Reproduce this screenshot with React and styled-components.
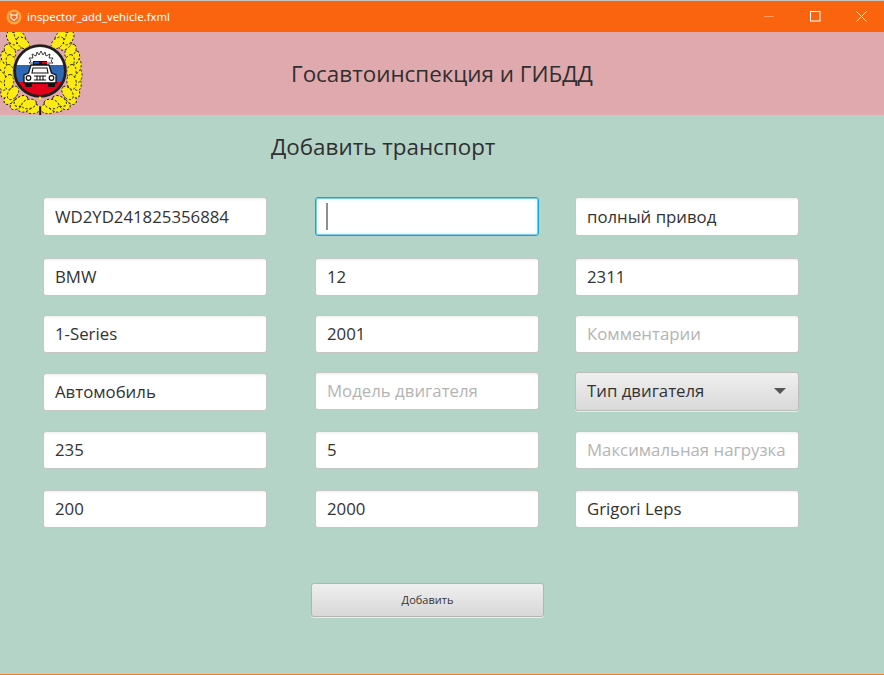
import React from "react";
import styled, { createGlobalStyle } from "styled-components";

const GlobalStyle = createGlobalStyle`
  html, body {
    margin: 0;
    padding: 0;
    height: 100%;
    overflow: hidden;
    background: #b5d4c8;
  }
  input::placeholder {
    color: #b4b4b4;
    opacity: 1;
  }
`;

const Page = styled.div`
  width: 884px;
  height: 675px;
  display: flex;
  flex-direction: column;
  font-family: "Open Sans", "Noto Sans", sans-serif;
  border-top: 1px solid #c9c4c0;
  border-bottom: 1px solid #fa7a1e;
  box-sizing: border-box;
`;

const TitleBar = styled.div`
  height: 31px;
  flex: none;
  display: flex;
  align-items: center;
  background: #fb640f;
  color: #fff;
  font-size: 11.3px;
  padding-left: 6px;
`;

const TitleText = styled.span`
  margin-left: 5px;
  flex: 1;
  font-family: "Noto Sans", sans-serif;
`;

const WinButton = styled.div`
  width: 46px;
  height: 31px;
  display: flex;
  align-items: center;
  justify-content: center;
`;

const Banner = styled.header`
  height: 83px;
  flex: none;
  display: flex;
  background: #e0a9ae;
`;

const Emblem = styled.svg`
  width: 84px;
  height: 83px;
  flex: none;
`;

const BannerTitle = styled.h1`
  margin: 0 0 0 207px;
  font-size: 22.4px;
  font-weight: 400;
  line-height: 83px;
  color: #2f2f2f;
`;

const Body = styled.main`
  flex: 1;
  display: flex;
  flex-direction: column;
`;

const Heading = styled.h2`
  margin: 16px 0 0 271px;
  font-size: 22.4px;
  font-weight: 400;
  line-height: 32px;
  color: #2f2f2f;
`;

const Form = styled.div`
  display: grid;
  grid-template-columns: 272px 260px 224px;
  grid-template-rows: 61px 57px 57px 59px 59px 38px;
  margin: 34px 0 0 43px;
`;

const Field = styled.input`
  box-sizing: border-box;
  width: 224px;
  height: ${(p) => (p.$row === 1 ? 39 : 38)}px;
  padding: 0 11px ${(p) => (p.$row === 1 ? 0 : 2)}px;
  margin-top: ${(p) => p.$shift || 0}px;
  grid-column: ${(p) => p.$col};
  grid-row: ${(p) => p.$row};
  border: 1px solid #c6c6c6;
  border-radius: 3px;
  background: linear-gradient(#f1f1f1 0, #fff 3px);
  font-family: inherit;
  font-size: 16.8px;
  color: #333;
  outline: none;
  ${(p) =>
    p.$focused &&
    `
    border: 1px solid #10a6d8;
    box-shadow: inset 0 0 0 1px #7fcdea, inset 0 0 3px 2px #dff3fb;
    background: #fff;
  `}
`;

const Caret = styled.div`
  grid-column: 2;
  grid-row: 1;
  justify-self: start;
  align-self: start;
  width: 2px;
  height: 27px;
  margin: 6px 0 0 11px;
  background: #8f8f8f;
  z-index: 1;
`;

const Select = styled.div`
  box-sizing: border-box;
  width: 224px;
  height: 39px;
  grid-column: 3;
  grid-row: 4;
  display: flex;
  align-items: center;
  justify-content: space-between;
  padding: 0 12px 2px 11px;
  border: 1px solid #bcbcbc;
  border-radius: 3px;
  background: linear-gradient(#efefef, #d9d9d9);
  box-shadow: 0 1px 0 #e6eeea;
  font-size: 16.8px;
  color: #333;
`;

const Arrow = styled.span`
  width: 0;
  height: 0;
  border-left: 6px solid transparent;
  border-right: 6px solid transparent;
  border-top: 6px solid #555;
`;

const SubmitRow = styled.div`
  margin: 55px 0 0 311px;
`;

const Submit = styled.button`
  box-sizing: border-box;
  width: 233px;
  height: 34px;
  border: 1px solid #b4b4b4;
  border-radius: 3px;
  background: linear-gradient(#efefef, #d8d8d8);
  box-shadow: 0 1px 0 #e8f0ec;
  font-family: inherit;
  font-size: 11px;
  color: #333;
  padding: 0 0 2px;
`;

const fields = [
  { col: 1, row: 1, value: "WD2YD241825356884" },
  { col: 1, row: 2, value: "BMW" },
  { col: 1, row: 3, value: "1-Series" },
  { col: 1, row: 4, value: "Автомобиль", shift: 1 },
  { col: 1, row: 5, value: "235" },
  { col: 1, row: 6, value: "200" },
  { col: 2, row: 1, value: "", focused: true },
  { col: 2, row: 2, value: "12" },
  { col: 2, row: 3, value: "2001" },
  { col: 2, row: 4, placeholder: "Модель двигателя" },
  { col: 2, row: 5, value: "5" },
  { col: 2, row: 6, value: "2000" },
  { col: 3, row: 1, value: "полный привод" },
  { col: 3, row: 2, value: "2311" },
  { col: 3, row: 3, placeholder: "Комментарии" },
  { col: 3, row: 5, placeholder: "Максимальная нагрузка" },
  { col: 3, row: 6, value: "Grigori Leps" },
];

function AppIcon() {
  return (
    <svg width="16" height="16" viewBox="0 0 16 16">
      <circle cx="8" cy="8" r="7.5" fill="#f4a93f" />
      <circle cx="8" cy="8" r="5" fill="#ee6a2a" />
      <path d="M5 5l1.500 1.200h3L11 5v4L8 11.500 5 9z" fill="none" stroke="#fde3cf" strokeWidth="1.3" />
    </svg>
  );
}

// half of the wreath: x, y and tilt of each leaf
const leaves = [
  [33, 77, 8], [25, 75, 22], [17, 72, 35], [10, 66, 50], [6, 59, 65],
  [4, 51, 78], [3, 43, 90], [4, 34, 100], [6, 26, 112], [10, 19, 125],
  [15, 12, 135], [12, 6, 120], [20, 5, 125], [23, 11, 140],
  [11, 30, 105], [9, 40, 95], [9, 50, 82], [13, 61, 55], [21, 69, 30], [29, 72, 14],
];

function Wreath({ flip }) {
  return (
    <g transform={flip ? "translate(80.5 0) scale(-1 1)" : undefined}>
      {leaves.map(([x, y, r], i) => (
        <ellipse
          key={i}
          cx={x}
          cy={y}
          rx="7.5"
          ry="4.6"
          transform={`rotate(${-r} ${x} ${y})`}
          fill="#fbea14"
          stroke="#191905"
          strokeWidth="0.9"
          strokeDasharray="2.2 1.8"
        />
      ))}
    </g>
  );
}

function GibddEmblem() {
  return (
    <Emblem viewBox="0 0 84 83">
      <Wreath />
      <Wreath flip />
      <path d="M39.200 75h2v8h-2z" fill="#191905" />
      <circle cx="40" cy="39" r="27.500" fill="#e0a9ae" />
      <circle cx="40" cy="39" r="26.800" fill="#20201e" />
      <clipPath id="disc">
        <circle cx="40" cy="39" r="24" />
      </clipPath>
      <g clipPath="url(#disc)">
        <rect x="14" y="12" width="52" height="21" fill="#fff" />
        <rect x="14" y="33" width="52" height="17" fill="#2e68b4" />
        <rect x="14" y="50" width="52" height="16" fill="#e2001a" />
      </g>
      <path d="M29 31l2-2-2-3 4 0-1-4 4 2 1-4 2 3 2-4 2 4 2-3 1 4 4-2-1 4 4 0-2 3 2 2z" fill="#fff" stroke="#111" strokeWidth="0.8" />
      <rect x="33" y="29" width="14" height="4" fill="#111" />
      <rect x="34" y="30" width="5" height="1.600" fill="#2c5fd0" />
      <rect x="42" y="30" width="5" height="1.600" fill="#e2001a" />
      <path d="M31 33h18l2.500 8 4.500 2v8H24v-8l4.500-2z" fill="#fff" stroke="#111" strokeWidth="1.3" />
      <path d="M33 36h14l1 5H32z" fill="#fff" stroke="#111" strokeWidth="1.1" />
      <circle cx="28.500" cy="46" r="2.300" fill="#fff" stroke="#111" strokeWidth="1.2" />
      <circle cx="51.500" cy="46" r="2.300" fill="#fff" stroke="#111" strokeWidth="1.2" />
      <path d="M34 44h12M34 48h12M37 44v4M40 44v4M43 44v4" stroke="#111" strokeWidth="1.1" />
      <rect x="25" y="51" width="7" height="4" rx="1" fill="#111" />
      <rect x="48" y="51" width="7" height="4" rx="1" fill="#111" />
      <path d="M40 64l.8 1.200 1.200.8-1.200.8-.8 1.200-.8-1.200-1.200-.8 1.200-.8z" fill="#fbea14" />
    </Emblem>
  );
}

export default function App() {
  return (
    <>
      <GlobalStyle />
      <Page>
        <TitleBar>
          <AppIcon />
          <TitleText>inspector_add_vehicle.fxml</TitleText>
          <WinButton>
            <svg width="11" height="11" viewBox="0 0 11 11">
              <path d="M0 5.500h10" stroke="#fd9a5f" strokeWidth="1" />
            </svg>
          </WinButton>
          <WinButton>
            <svg width="11" height="11" viewBox="0 0 11 11">
              <rect x="0.5" y="0.5" width="9.5" height="9.5" fill="none" stroke="#fff" />
            </svg>
          </WinButton>
          <WinButton>
            <svg width="11" height="11" viewBox="0 0 11 11">
              <path d="M0.500 0.500l10 10M10.500 0.500l-10 10" stroke="#fff" strokeWidth="1" />
            </svg>
          </WinButton>
        </TitleBar>
        <Banner>
          <GibddEmblem />
          <BannerTitle>Госавтоинспекция и ГИБДД</BannerTitle>
        </Banner>
        <Body>
          <Heading>Добавить транспорт</Heading>
          <Form>
            {fields.map((f) => (
              <Field
                key={`${f.col}-${f.row}`}
                $col={f.col}
                $row={f.row}
                $shift={f.shift}
                $focused={f.focused}
                defaultValue={f.value}
                placeholder={f.placeholder}
              />
            ))}
            <Caret />
            <Select>
              Тип двигателя
              <Arrow />
            </Select>
          </Form>
          <SubmitRow>
            <Submit>Добавить</Submit>
          </SubmitRow>
        </Body>
      </Page>
    </>
  );
}
